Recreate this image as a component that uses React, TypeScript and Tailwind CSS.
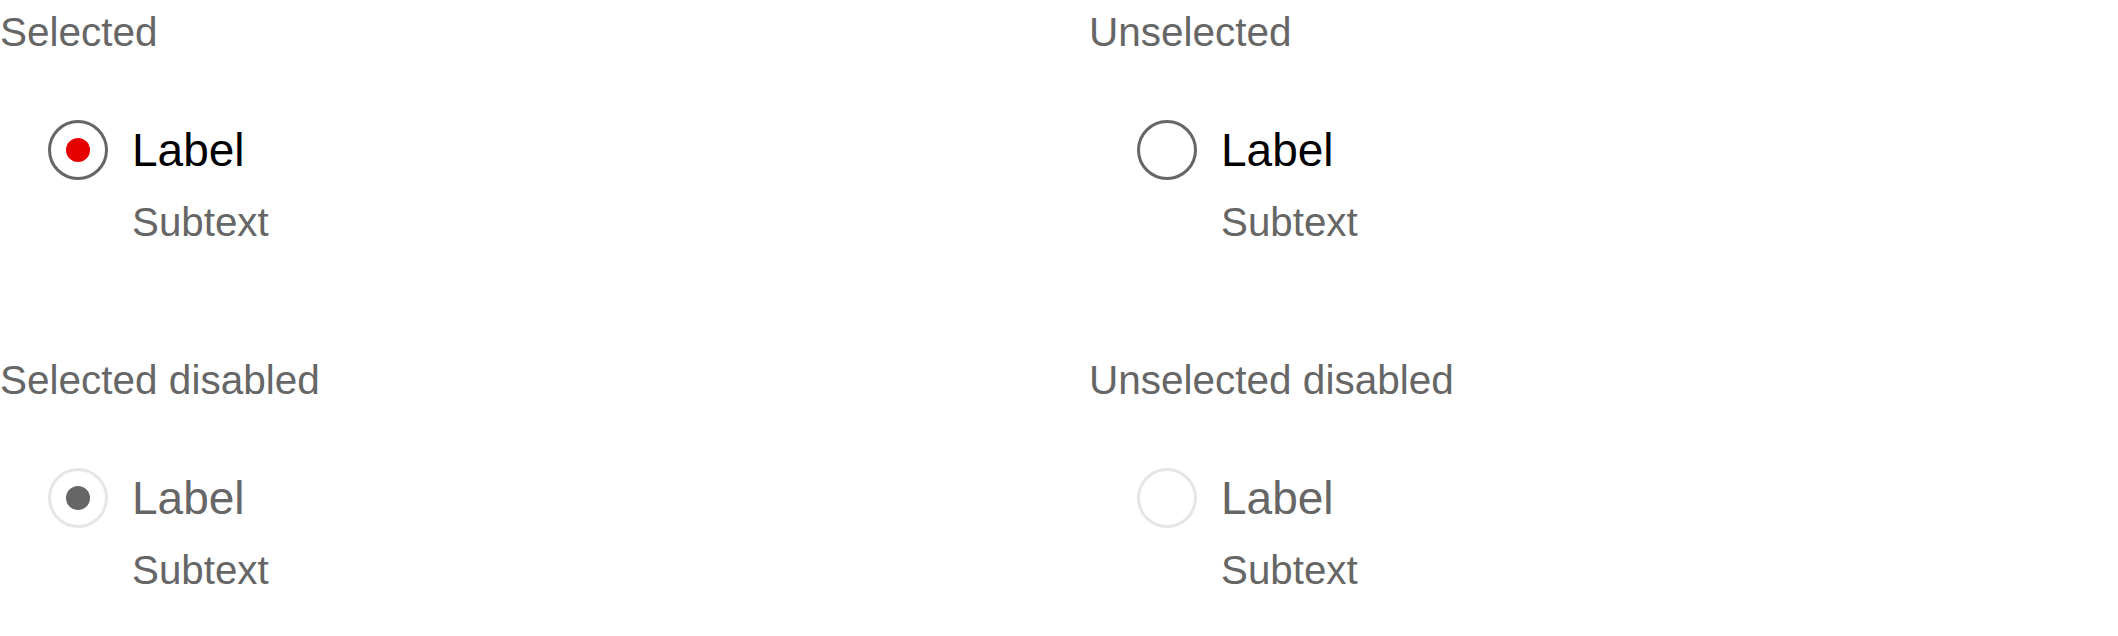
import React from "react";

type Props = {
  title: string;
  selected: boolean;
  disabled: boolean;
};

function Cell({ title, selected, disabled }: Props) {
  const ring = disabled ? "border-[#e6e6e6]" : "border-[#666666]";
  const dot = disabled ? "bg-[#666666]" : "bg-[#e60000]";
  const label = disabled ? "text-[#666666]" : "text-black";
  return (
    <div className="pt-[12px]">
      <div className="text-[40.5px] leading-[40px] text-[#666666]">{title}</div>
      <div className="mt-[68px] flex items-start pl-[48px]">
        <div
          className={`flex h-[60px] w-[60px] items-center justify-center rounded-full border-[3px] ${ring}`}
        >
          {selected && <div className={`h-[24px] w-[24px] rounded-full ${dot}`} />}
        </div>
        <div className={`ml-[24px] text-[46px] leading-[60px] ${label}`}>Label</div>
      </div>
      <div className="mt-[23px] pl-[132px] text-[40.3px] leading-[40px] text-[#666666]">Subtext</div>
    </div>
  );
}

export default function App() {
  return (
    <div
      className="grid h-[636px] w-[2118px] grid-cols-[1089px_1fr] grid-rows-[348px_288px] overflow-hidden bg-white"
      style={{ fontFamily: '"Liberation Sans", Arial, sans-serif' }}
    >
      <Cell title="Selected" selected disabled={false} />
      <Cell title="Unselected" selected={false} disabled={false} />
      <Cell title="Selected disabled" selected disabled />
      <Cell title="Unselected disabled" selected={false} disabled />
    </div>
  );
}
